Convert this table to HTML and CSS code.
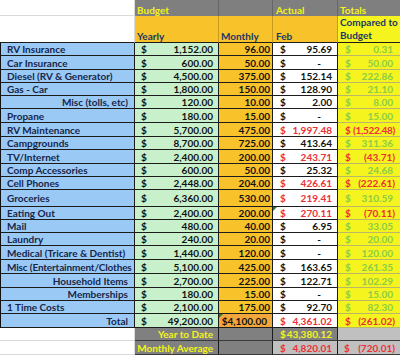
FILE: index.html
```html
<!DOCTYPE html>
<html>
<head>
<meta charset="utf-8">
<link rel="stylesheet" href="styles.css">
</head>
<body>
<div class="sheet">
  <div class="c blank top"></div>
  <div class="c hg">Budget</div>
  <div class="c hg"></div>
  <div class="c hg ha">Actual</div>
  <div class="c hg ht">Totals</div>

  <div class="c blank sub"></div>
  <div class="c ho">Yearly</div>
  <div class="c ho">Monthly</div>
  <div class="c ho ha">Feb</div>
  <div class="c hy">Compared to<br>Budget</div>

  <div class="c lbl">RV Insurance</div>
  <div class="c yr"><span>$</span><span>1,152.00</span></div>
  <div class="c mo">96.00</div>
  <div class="c ac"><span>$</span><span>95.69</span></div>
  <div class="c tot pos"><span>$</span><span>0.31</span></div>

  <div class="c lbl">Car Insurance</div>
  <div class="c yr"><span>$</span><span>600.00</span></div>
  <div class="c mo">50.00</div>
  <div class="c ac"><span>$</span><span class="dash">-</span></div>
  <div class="c tot pos"><span>$</span><span>50.00</span></div>

  <div class="c lbl">Diesel (RV &amp; Generator)</div>
  <div class="c yr"><span>$</span><span>4,500.00</span></div>
  <div class="c mo">375.00</div>
  <div class="c ac"><span>$</span><span>152.14</span></div>
  <div class="c tot pos"><span>$</span><span>222.86</span></div>

  <div class="c lbl">Gas - Car</div>
  <div class="c yr"><span>$</span><span>1,800.00</span></div>
  <div class="c mo">150.00</div>
  <div class="c ac"><span>$</span><span>128.90</span></div>
  <div class="c tot pos"><span>$</span><span>21.10</span></div>

  <div class="c lbl r">Misc (tolls, etc)</div>
  <div class="c yr"><span>$</span><span>120.00</span></div>
  <div class="c mo">10.00</div>
  <div class="c ac"><span>$</span><span>2.00</span></div>
  <div class="c tot pos"><span>$</span><span>8.00</span></div>

  <div class="c lbl">Propane</div>
  <div class="c yr"><span>$</span><span>180.00</span></div>
  <div class="c mo">15.00</div>
  <div class="c ac"><span>$</span><span class="dash">-</span></div>
  <div class="c tot pos"><span>$</span><span>15.00</span></div>

  <div class="c lbl">RV Maintenance</div>
  <div class="c yr"><span>$</span><span>5,700.00</span></div>
  <div class="c mo">475.00</div>
  <div class="c ac neg"><span>$</span><span>1,997.48</span></div>
  <div class="c tot neg"><span>$</span><span class="paren wide">(1,522.48)</span></div>

  <div class="c lbl">Campgrounds</div>
  <div class="c yr"><span>$</span><span>8,700.00</span></div>
  <div class="c mo">725.00</div>
  <div class="c ac"><span>$</span><span>413.64</span></div>
  <div class="c tot pos"><span>$</span><span>311.36</span></div>

  <div class="c lbl">TV/Internet</div>
  <div class="c yr"><span>$</span><span>2,400.00</span></div>
  <div class="c mo">200.00</div>
  <div class="c ac neg"><span>$</span><span>243.71</span></div>
  <div class="c tot neg"><span>$</span><span class="paren">(43.71)</span></div>

  <div class="c lbl">Comp Accessories</div>
  <div class="c yr"><span>$</span><span>600.00</span></div>
  <div class="c mo">50.00</div>
  <div class="c ac"><span>$</span><span>25.32</span></div>
  <div class="c tot pos"><span>$</span><span>24.68</span></div>

  <div class="c lbl">Cell Phones</div>
  <div class="c yr"><span>$</span><span>2,448.00</span></div>
  <div class="c mo">204.00</div>
  <div class="c ac neg"><span>$</span><span>426.61</span></div>
  <div class="c tot neg"><span>$</span><span class="paren">(222.61)</span></div>

  <div class="c lbl tall">Groceries</div>
  <div class="c yr tall"><span>$</span><span>6,360.00</span></div>
  <div class="c mo tall">530.00</div>
  <div class="c ac neg tall"><span>$</span><span>219.41</span></div>
  <div class="c tot pos tall"><span>$</span><span>310.59</span></div>

  <div class="c lbl">Eating Out</div>
  <div class="c yr"><span>$</span><span>2,400.00</span></div>
  <div class="c mo">200.00</div>
  <div class="c ac neg flag"><span>$</span><span>270.11</span></div>
  <div class="c tot neg"><span>$</span><span class="paren">(70.11)</span></div>

  <div class="c lbl">Mail</div>
  <div class="c yr"><span>$</span><span>480.00</span></div>
  <div class="c mo">40.00</div>
  <div class="c ac"><span>$</span><span>6.95</span></div>
  <div class="c tot pos"><span>$</span><span>33.05</span></div>

  <div class="c lbl">Laundry</div>
  <div class="c yr"><span>$</span><span>240.00</span></div>
  <div class="c mo">20.00</div>
  <div class="c ac"><span>$</span><span class="dash">-</span></div>
  <div class="c tot pos"><span>$</span><span>20.00</span></div>

  <div class="c lbl">Medical (Tricare &amp; Dentist)</div>
  <div class="c yr"><span>$</span><span>1,440.00</span></div>
  <div class="c mo">120.00</div>
  <div class="c ac"><span>$</span><span class="dash">-</span></div>
  <div class="c tot pos"><span>$</span><span>120.00</span></div>

  <div class="c lbl fit">Misc (Entertainment/Clothes</div>
  <div class="c yr"><span>$</span><span>5,100.00</span></div>
  <div class="c mo">425.00</div>
  <div class="c ac"><span>$</span><span>163.65</span></div>
  <div class="c tot pos"><span>$</span><span>261.35</span></div>

  <div class="c lbl r">Household Items</div>
  <div class="c yr"><span>$</span><span>2,700.00</span></div>
  <div class="c mo">225.00</div>
  <div class="c ac"><span>$</span><span>122.71</span></div>
  <div class="c tot pos"><span>$</span><span>102.29</span></div>

  <div class="c lbl r">Memberships</div>
  <div class="c yr"><span>$</span><span>180.00</span></div>
  <div class="c mo">15.00</div>
  <div class="c ac"><span>$</span><span class="dash">-</span></div>
  <div class="c tot pos"><span>$</span><span>15.00</span></div>

  <div class="c lbl">1 Time Costs</div>
  <div class="c yr"><span>$</span><span>2,100.00</span></div>
  <div class="c mo">175.00</div>
  <div class="c ac"><span>$</span><span>92.70</span></div>
  <div class="c tot pos"><span>$</span><span>82.30</span></div>

  <div class="c lbl r">Total</div>
  <div class="c yr"><span>$</span><span>49,200.00</span></div>
  <div class="c mo mo-total flag">$4,100.00</div>
  <div class="c ac neg"><span>$</span><span>4,361.02</span></div>
  <div class="c tot neg"><span>$</span><span class="paren">(261.02)</span></div>

  <div class="c blank"></div>
  <div class="c gy lab">Year to Date</div>
  <div class="c gy"></div>
  <div class="c gy money ytd"><span>$</span><span>43,380.12</span></div>
  <div class="c lg"></div>

  <div class="c blank"></div>
  <div class="c gy lab">Monthly Average</div>
  <div class="c gy"></div>
  <div class="c lg money neg"><span>$</span><span>4,820.01</span></div>
  <div class="c lg money tmoney neg"><span>$</span><span class="paren">(720.01)</span></div>
</div>
</body>
</html>
```

FILE: styles.css
```css
* {
  box-sizing: border-box;
  margin: 0;
  padding: 0;
}

html,
body {
  background: #ffffff;
}

body {
  font-family: Lato, "Liberation Sans", sans-serif;
  font-weight: 700;
  font-size: 10px;
  color: #111111;
}

.sheet {
  display: grid;
  width: 400px;
  grid-template-columns: 135px 84px 54px 65px 62px;
  grid-template-rows:
    16px 27px
    13px 14px 13px 13px 13px 14px 14px 13px 14px 13px 13px
    17px
    13px 13px 13px 14px 14px 14px 13px 13px 14px 13px 14px;
}

.c {
  position: relative;
  display: flex;
  align-items: flex-end;
  line-height: 11px;
  white-space: nowrap;
  overflow: hidden;
  border-right: 1px solid #1c1c1c;
  border-bottom: 1px solid #1c1c1c;
}

/* header rows */
.blank {
  background: #ffffff;
  border-right: 1px solid #dadada;
  border-bottom: 1px solid #dadada;
}

.blank.sub {
  border-bottom: 1px solid #1c1c1c;
}

.hg {
  background: #7f7f7f;
  color: #f4f41a;
  padding-left: 2px;
  border-bottom: none;
  border-right: 1px solid #666666;
}

.ho {
  background: #f8c22a;
  color: #203864;
  padding-left: 2px;
  border-right: 1px solid #c99a1c;
}

.ha {
  padding-left: 3px;
}

.hy {
  background: #f6f41f;
  color: #203864;
  padding-left: 2px;
  line-height: 13px;
  border-right: none;
}

.ht {
  border-right: none;
}

/* label column */
.lbl {
  background: #9bc9f5;
  color: #15264a;
  padding: 0 6px;
  border-left: 1px solid #111111;
}

.lbl.r {
  justify-content: flex-end;
}

.lbl.fit {
  padding-right: 0;
  letter-spacing: -0.15px;
}

/* money columns */
.yr,
.ac,
.tot,
.money {
  justify-content: space-between;
}

.yr {
  background: #c8f1cb;
  padding: 0 5px 0 6px;
}

.mo {
  background: #f8c22a;
  justify-content: flex-end;
  padding-right: 2px;
}

.mo-total {
  background: #f2a63c;
  padding-right: 5px;
}

.ac {
  background: #ffffff;
  padding: 0 5px 0 7px;
}

.tot {
  background: #f6f41f;
  padding: 0 7px 0 7px;
  border-right: none;
  border-bottom: 1px solid #b9b86a;
}

.pos {
  color: #8ccb48;
}

.neg {
  color: #ef2f37;
}

.dash {
  margin-right: 11px;
}

.paren {
  margin-right: -2px;
}

.wide {
  letter-spacing: -0.3px;
}

.tall {
  padding-bottom: 2px;
}

/* summary rows */
.gy {
  background: #808080;
  color: #f4f41a;
  border-bottom: 1px solid #3a3a3a;
}

.lab {
  justify-content: flex-end;
  padding-right: 5px;
}

.lg {
  background: #c0c0c0;
  border-right: none;
  border-bottom: 1px solid #3a3a3a;
}

.money {
  padding: 0 5px 0 7px;
}

.ac.money,
.lg.money {
  border-right: 1px solid #1c1c1c;
}

.tmoney {
  padding: 0 7px 0 6px;
  border-right: none !important;
}

.ytd {
  color: #f4f41a;
}

/* excel error indicator */
.flag::before {
  content: "";
  position: absolute;
  left: 0;
  top: 0;
  border-top: 4px solid #2f7a2a;
  border-right: 4px solid transparent;
}
```
